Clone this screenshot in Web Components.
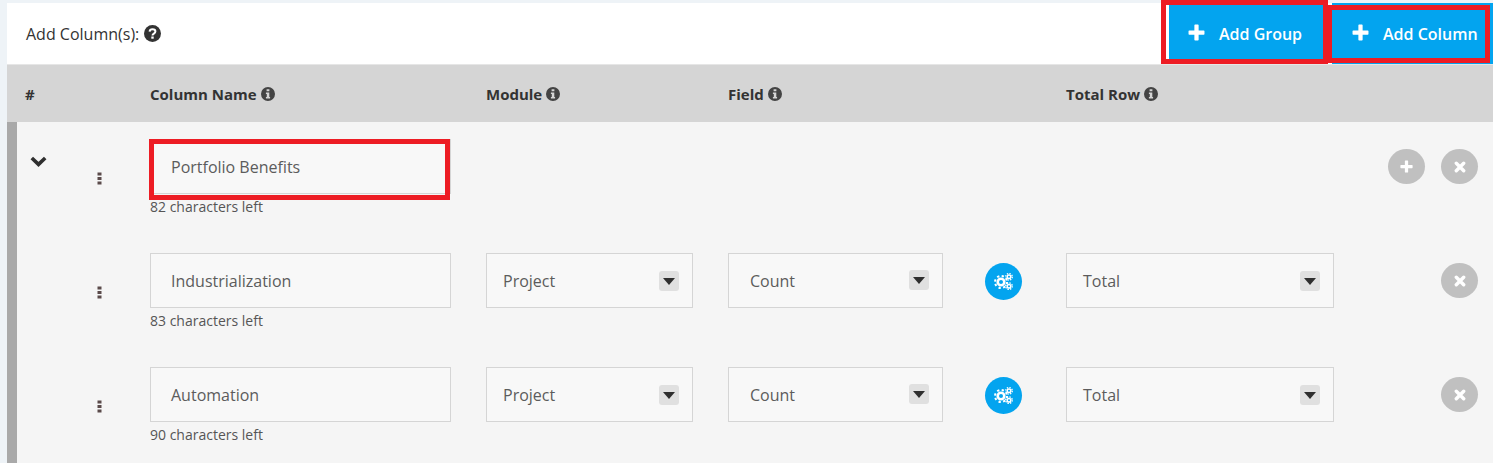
<!DOCTYPE html>
<html lang="en"><head><meta charset="utf-8"><title>Add Columns</title>
<style>
html,body{margin:0;height:463px;overflow:hidden;background:#eef3f7;font-family:"Open Sans","Liberation Sans",sans-serif}
:root{--cols:73px 60px 336px 242px 257px 81px 322px 53px 1fr}
</style></head><body>
<col-panel>
  <col-toolbar>
    <span slot="title">Add Column(s):</span>
    <add-button slot="actions" style="--w:159px;--pad:19px" box="group">Add Group</add-button>
    <add-button slot="actions" style="--w:161px;--pad:20px" box="column">Add Column</add-button>
  </col-toolbar>
  <head-row>
    <head-cell style="grid-column:1;padding-left:8px">#</head-cell>
    <head-cell style="grid-column:3" info>Column Name</head-cell>
    <head-cell style="grid-column:4" info>Module</head-cell>
    <head-cell style="grid-column:5" info>Field</head-cell>
    <head-cell style="grid-column:7" info>Total Row</head-cell>
  </head-row>
  <col-group>
    <col-row group hint="82 characters left" value="Portfolio Benefits"></col-row>
    <col-row hint="83 characters left" value="Industrialization"></col-row>
    <col-row hint="90 characters left" value="Automation"></col-row>
  </col-group>
</col-panel>
<script>
function def(name,css,html,extra){
  customElements.define(name,class extends HTMLElement{
    constructor(){super();this.attachShadow({mode:'open'}).innerHTML='<style>'+css+'</style>'+(typeof html==='function'?html(this):html);}
    connectedCallback(){if(extra)extra(this);}
  });
}
const INFO='<svg width="14" height="14" viewBox="0 0 14 14"><path fill="#444" fill-rule="evenodd" d="M7 0a7 7 0 1 1 0 14A7 7 0 0 1 7 0zM5.6 2.2v2.1h2.8V2.2zM4.9 5.6v1.5h.9v3H4.9v1.5h4.2v-1.5h-.8V5.6z"/></svg>';
const Q='<svg width="17" height="17" viewBox="0 0 17 17"><defs><mask id="q"><rect width="17" height="17" fill="#fff"/><path d="M5.6 6.6c.2-1.600 1.400-2.300 2.900-2.300 1.700 0 2.900.9 2.900 2.300 0 2.100-2.900 1.900-2.900 3.900" fill="none" stroke="#000" stroke-width="2"/><rect x="7.300" y="11.500" width="2.400" height="2.200" fill="#000"/></mask></defs><circle cx="8.500" cy="8.500" r="8.500" fill="#333" mask="url(#q)"/></svg>';
const PLUS=s=>`<svg width="${s}" height="${s}" viewBox="0 0 16 16"><path fill="#fff" d="M6 1.200Q6 .5 6.700 .5h2.600q.7 0 .7 .7V6h4.800q.7 0 .7 .7v2.600q0 .7-.7 .7H10v4.800q0 .7-.7 .7H6.700q-.7 0-.7-.7V10H1.200q-.7 0-.7-.7V6.700Q.5 6 1.200 6H6z"/></svg>`;
const CROSS='<svg width="12" height="12" viewBox="0 0 12 12"><path fill="none" stroke="#fff" stroke-width="3.400" stroke-linecap="round" d="M2.300 2.300l7.400 7.400M9.700 2.300l-7.400 7.400"/></svg>';
const GEARS='<svg width="19" height="17" viewBox="0 0 19 17" fill="none" stroke="#fff"><circle cx="7" cy="9" r="3.300" stroke-width="2.600"/><circle cx="7" cy="9" r="6" stroke-width="2" stroke-dasharray="2.300 2.410"/><circle cx="15" cy="3.800" r="1.800" stroke-width="1.500"/><circle cx="15" cy="3.800" r="3.300" stroke-width="1.300" stroke-dasharray="1.400 1.190"/><circle cx="15" cy="13.200" r="1.800" stroke-width="1.500"/><circle cx="15" cy="13.200" r="3.300" stroke-width="1.300" stroke-dasharray="1.400 1.190"/></svg>';
const DOTS='<svg width="5" height="13" viewBox="0 0 5 13" fill="#5a4a4a"><rect x=".5" y=".5" width="4" height="3"/><rect x=".5" y="5" width="4" height="3"/><rect x=".5" y="9.500" width="4" height="3"/></svg>';
const CHEV='<svg width="17" height="11" viewBox="0 0 17 11"><path fill="none" stroke="#2f2f2f" stroke-width="3.600" d="M1.800 2l6.700 6.400L15.200 2"/></svg>';

def('col-panel',':host{display:block;margin:3px 0 0 7px}','<slot></slot>');
def('col-toolbar',`:host{display:flex;height:61px;background:#fff;border-bottom:1px solid #e6e6e6;justify-content:space-between}
 .t{display:flex;align-items:center;gap:5px;padding:0 0 0 19px;font-size:16px;color:#333}
 svg{display:block;margin-top:-1px}
 .a{display:flex;gap:4px}`,`<div class="t"><slot name="title"></slot>${Q}</div><div class="a"><slot name="actions"></slot></div>`);
def('add-button',`:host{display:flex;position:relative;box-sizing:border-box;width:var(--w);height:61px;background:#03a4ef;color:#fff;font-size:16px;font-weight:600;align-items:center;padding-left:var(--pad);gap:14px;white-space:nowrap}
 svg{display:block;margin-top:-3px}
 .box{position:absolute;border:5px solid #ed1c24;box-sizing:border-box}
 .group{left:-8px;right:0;top:-3px;bottom:0;}
 .column{left:-4px;right:3px;top:2px;bottom:1px;border-left-width:4px}`,
 h=>`${PLUS(17)}<slot></slot><div class="box ${h.getAttribute('box')}"></div>`);
def('head-row',`:host{display:grid;grid-template-columns:var(--cols);box-sizing:border-box;height:57px;padding-left:10px;background:#d5d5d5;align-items:center}`,'<slot></slot>');
def('head-cell',`:host{display:flex;align-items:center;gap:4px;font-size:15px;font-weight:700;color:#333;white-space:nowrap}svg{display:block}`,
 h=>`<slot></slot>${h.hasAttribute('info')?INFO:''}`);
def('col-group',`:host{display:block;border-left:10px solid #a9a9a9;background:#f5f5f5}`,'<slot></slot>');
def('field-input',`:host{display:flex;align-items:center;box-sizing:border-box;width:301px;height:55px;padding-left:20px;background:#f8f8f8;border:1px solid #d5d5d5;font-size:16px;color:#5c5c5c;position:relative}
 .box{position:absolute;left:-2px;top:-1px;width:301px;height:61px;box-sizing:border-box;border:5px solid #ed1c24}`,
 h=>`<slot></slot>${h.hasAttribute('boxed')?'<div class="box"></div>':''}`);
def('field-select',`:host{display:flex;align-items:center;justify-content:space-between;box-sizing:border-box;height:55px;padding-left:var(--pad,16px);padding-right:13px;background:#f8f8f8;border:1px solid #d5d5d5;font-size:16px;color:#5c5c5c}
 .chip{display:flex;align-items:center;justify-content:center;width:20px;height:20px;margin-top:var(--chip,1px);border-radius:3px;background:#e0e0e0}
 .tri{width:0;height:0;border:6px solid transparent;border-top:7px solid #2f2f2f;border-bottom:0}`,
 `<slot></slot><div class="chip"><div class="tri"></div></div>`);
def('round-btn',`:host{display:flex;align-items:center;justify-content:center;width:37px;height:35px;border-radius:50%;background:#c0c0c0}
 :host([blue]){height:37px;background:#03a4ef}svg{display:block}`,
 h=>({plus:PLUS(13),cross:CROSS,gears:GEARS})[h.getAttribute('icon')]);
def('col-row',`:host{display:grid;grid-template-columns:var(--cols);box-sizing:border-box;height:114px;padding-top:17px;align-items:start}
 .chev{padding:17px 0 0 13px}.chev svg,.drag svg{display:block}
 .drag{padding:33px 0 0 7px}
 .name{grid-column:3}
 .hint{margin-top:3px;font-size:14px;line-height:20px;color:#555}
 .btn{margin-top:10px}`,
 h=>{const g=h.hasAttribute('group');const v=h.getAttribute('value');
 return `<div class="chev">${g?CHEV:''}</div><div class="drag">${DOTS}</div>
 <div class="name"><field-input ${g?'boxed':''}>${v}</field-input><div class="hint">${h.getAttribute('hint')}</div></div>`+
 (g?`<div style="grid-column:8" class="btn"><round-btn icon="plus"></round-btn></div><div style="grid-column:9" class="btn"><round-btn icon="cross"></round-btn></div>`:
 `<field-select style="grid-column:4;width:207px">Project</field-select>
  <field-select style="grid-column:5;width:215px;--pad:21px;--chip:-1px">Count</field-select>
  <div style="grid-column:6" class="btn"><round-btn blue icon="gears"></round-btn></div>
  <field-select style="grid-column:7;width:268px">Total</field-select>
  <div style="grid-column:9" class="btn"><round-btn icon="cross"></round-btn></div>`)});
</script>
</body></html>
